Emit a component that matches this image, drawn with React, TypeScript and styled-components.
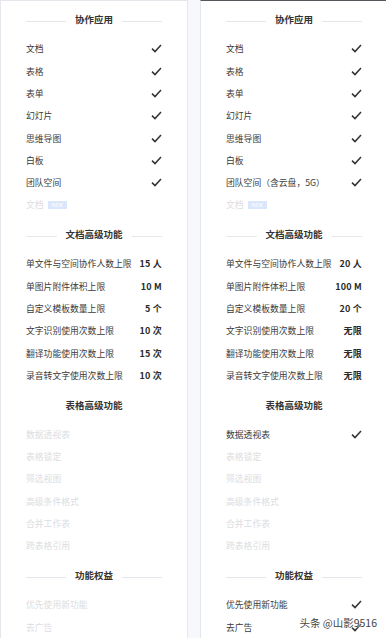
import React from 'react';
import styled, { createGlobalStyle } from 'styled-components';

const GlobalStyle = createGlobalStyle`
  html, body {
    margin: 0;
    padding: 0;
    background: #fff;
  }
  body {
    font-family: "Noto Sans CJK SC", "Noto Sans", "Liberation Sans", sans-serif;
    -webkit-font-smoothing: antialiased;
  }
`;

const Page = styled.div`
  position: relative;
  display: flex;
  gap: 12px;
  width: 386px;
  height: 638px;
  overflow: hidden;
  background: #f7f8fc;
`;

const Card = styled.div<{ $active?: boolean }>`
  flex: 0 0 188px;
  box-sizing: border-box;
  padding: 0 25px;
  background: #fff;
  border: 1px solid #e6e7ec;
  border-bottom: none;
  border-top: ${(p) => (p.$active ? '1px solid #55575c' : '1px solid #e6e7ec')};
`;

const SectionTitle = styled.div`
  display: flex;
  align-items: center;
  gap: 9px;
  height: 36.7px;
  font-size: 9.5px;
  font-weight: 600;
  color: #333;
  white-space: nowrap;
`;

const TitleText = styled.span<{ $bare?: boolean }>`
  margin: ${(p) => (p.$bare ? '0 auto' : '0')};
`;

const Rule = styled.span`
  flex: 1;
  height: 1px;
  margin-top: 4px;
  background: #e6e7ec;
`;

const Row = styled.div<{ $off?: boolean }>`
  display: flex;
  align-items: center;
  justify-content: space-between;
  height: 22.3px;
  font-size: 8.8px;
  color: ${(p) => (p.$off ? '#dcdde0' : '#3a3a3a')};
  white-space: nowrap;
`;

const Label = styled.span`
  display: flex;
  align-items: center;
  gap: 4px;
`;

const Value = styled.span`
  font-size: 9px;
  font-weight: 700;
  color: #2b2b2b;
  letter-spacing: 0.2px;
`;

const NewTag = styled.span`
  display: inline-flex;
  align-items: center;
  justify-content: center;
  width: 19px;
  height: 8px;
  border-radius: 1px;
  background: #dae6fb;
  color: #f4f8ff;
  font-size: 5px;
  font-weight: 700;
  line-height: 1;
`;

const Watermark = styled.div`
  position: absolute;
  right: 9px;
  bottom: 8px;
  font-size: 10.5px;
  color: #444;
  text-shadow: 0 0 2px #fff, 0 0 2px #fff;
  font-family: "Noto Sans CJK SC", "Liberation Sans", sans-serif;
`;

const Check = () => (
  <svg width="11" height="9" viewBox="0 0 11 9">
    <path d="M1 4.6 L4 7.6 L10 1" fill="none" stroke="#333" strokeWidth="1.5" />
  </svg>
);

type Item = { label: string; value?: string; check?: boolean; off?: boolean; tag?: boolean };

type Section = { title: string; lined: boolean; items: Item[] };

const collab = (teamLabel: string): Item[] => [
  ...['文档', '表格', '表单', '幻灯片', '思维导图', '白板', teamLabel].map((label) => ({
    label,
    check: true,
  })),
  { label: '文档', off: true, tag: true },
];

const docLabels = [
  '单文件与空间协作人数上限',
  '单图片附件体积上限',
  '自定义模板数量上限',
  '文字识别使用次数上限',
  '翻译功能使用次数上限',
  '录音转文字使用次数上限',
];

const sheetLabels = ['数据透视表', '表格锁定', '筛选视图', '高级条件格式', '合并工作表', '跨表格引用'];

const plans: Section[][] = [
  [
    { title: '协作应用', lined: true, items: collab('团队空间') },
    {
      title: '文档高级功能',
      lined: true,
      items: docLabels.map((label, i) => ({
        label,
        value: ['15 人', '10 M', '5 个', '10 次', '15 次', '10 次'][i],
      })),
    },
    { title: '表格高级功能', lined: false, items: sheetLabels.map((label) => ({ label, off: true })) },
    {
      title: '功能权益',
      lined: true,
      items: ['优先使用新功能', '去广告'].map((label) => ({ label, off: true })),
    },
  ],
  [
    { title: '协作应用', lined: true, items: collab('团队空间（含云盘，5G）') },
    {
      title: '文档高级功能',
      lined: true,
      items: docLabels.map((label, i) => ({
        label,
        value: ['20 人', '100 M', '20 个', '无限', '无限', '无限'][i],
      })),
    },
    {
      title: '表格高级功能',
      lined: false,
      items: sheetLabels.map((label, i) => (i === 0 ? { label, check: true } : { label, off: true })),
    },
    {
      title: '功能权益',
      lined: true,
      items: ['优先使用新功能', '去广告'].map((label) => ({ label, check: true })),
    },
  ],
];

const PlanCard = ({ sections, active }: { sections: Section[]; active?: boolean }) => (
  <Card $active={active}>
    {sections.map((s) => (
      <React.Fragment key={s.title}>
        <SectionTitle>
          {s.lined && <Rule />}
          <TitleText $bare={!s.lined}>{s.title}</TitleText>
          {s.lined && <Rule />}
        </SectionTitle>
        {s.items.map((it, i) => (
          <Row key={i} $off={it.off}>
            <Label>
              {it.label}
              {it.tag && <NewTag>NEW</NewTag>}
            </Label>
            {it.value && <Value>{it.value}</Value>}
            {it.check && <Check />}
          </Row>
        ))}
      </React.Fragment>
    ))}
  </Card>
);

export default function App() {
  return (
    <>
      <GlobalStyle />
      <Page>
        <PlanCard sections={plans[0]} />
        <PlanCard sections={plans[1]} active />
        <Watermark>头条 @山影9516</Watermark>
      </Page>
    </>
  );
}
